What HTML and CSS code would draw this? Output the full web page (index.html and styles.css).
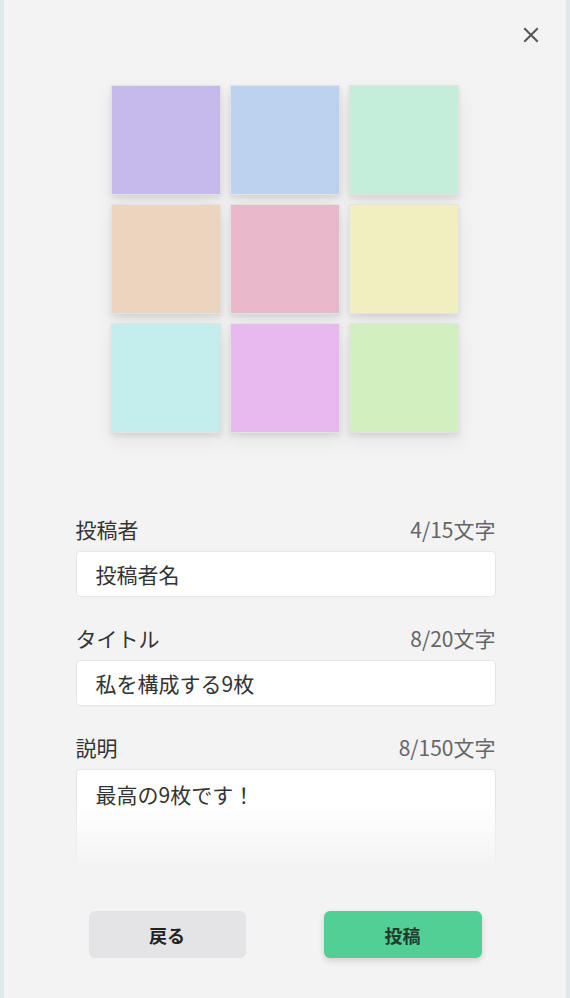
FILE: index.html
```html
<!DOCTYPE html>
<html lang="ja">
<head>
<meta charset="utf-8">
<title>投稿</title>
<link rel="stylesheet" href="styles.css">
</head>
<body>
<div class="panel">
  <div class="header">
    <button class="close" aria-label="閉じる">
      <svg width="16" height="16" viewBox="0 0 16 16"><path d="M2 2 L14 14 M14 2 L2 14" stroke="#555" stroke-width="2" stroke-linecap="square"/></svg>
    </button>
  </div>
  <div class="grid">
    <div class="tile c1"></div>
    <div class="tile c2"></div>
    <div class="tile c3"></div>
    <div class="tile c4"></div>
    <div class="tile c5"></div>
    <div class="tile c6"></div>
    <div class="tile c7"></div>
    <div class="tile c8"></div>
    <div class="tile c9"></div>
  </div>
  <div class="scroll">
    <div class="form">
      <div class="field">
        <div class="field-head"><span class="label">投稿者</span><span class="count">4/15文字</span></div>
        <div class="input">投稿者名</div>
      </div>
      <div class="field">
        <div class="field-head"><span class="label">タイトル</span><span class="count">8/20文字</span></div>
        <div class="input">私を構成する9枚</div>
      </div>
      <div class="field">
        <div class="field-head"><span class="label">説明</span><span class="count">8/150文字</span></div>
        <div class="input textarea">最高の9枚です！</div>
      </div>
    </div>
    <div class="fade"></div>
  </div>
  <div class="actions">
    <button class="btn back">戻る</button>
    <button class="btn post">投稿</button>
  </div>
</div>
</body>
</html>
```
FILE: styles.css
```css
* { box-sizing: border-box; }
html, body { margin: 0; padding: 0; }
body {
  background: #dfe8ea;
  font-family: "Noto Sans CJK JP", "Noto Sans", sans-serif;
  color: #333;
}
.panel {
  margin: 0 4px;
  height: 998px;
  background: #f3f3f3;
  display: flex;
  flex-direction: column;
}
.header {
  height: 85px;
  display: flex;
  justify-content: flex-end;
  align-items: flex-start;
  padding: 27px 27px 0 0;
}
.close {
  border: 0;
  background: transparent;
  padding: 0;
  width: 16px;
  height: 16px;
  display: flex;
}
.grid {
  display: grid;
  grid-template-columns: repeat(3, 110px);
  grid-auto-rows: 110px;
  gap: 9px;
  justify-content: center;
}
.tile {
  border: 1px solid #e3e3e3;
  box-shadow: 0 3px 5px rgba(0,0,0,0.08), 0 8px 18px rgba(0,0,0,0.07);
}
.c1 { background: #c6b9ec; }
.c2 { background: #bdd2ee; }
.c3 { background: #c4eed9; }
.c4 { background: #ecd5be; }
.c5 { background: #e8b9ca; }
.c6 { background: #f1efc0; }
.c7 { background: #c4eeee; }
.c8 { background: #e8b9ee; }
.c9 { background: #d2efbf; }
.scroll {
  position: relative;
  margin: 57px 50px 0 51px;
  height: 375px;
  overflow: hidden;
}
.form {
  width: 420px;
  margin: 0 auto;
  padding-top: 25px;
  display: flex;
  flex-direction: column;
  gap: 27px;
}
.field-head {
  display: flex;
  justify-content: space-between;
  align-items: center;
  height: 28px;
  font-size: 21px;
  line-height: 28px;
}
.label { color: #333; }
.count { color: #666; }
.input {
  margin-top: 8px;
  height: 46px;
  background: #fff;
  border: 1px solid #e6e6e6;
  border-radius: 4px;
  padding: 0 19px;
  font-size: 21px;
  line-height: 44px;
  color: #333;
}
.textarea {
  height: 140px;
  padding-top: 10px;
  line-height: 28px;
}
.fade {
  position: absolute;
  left: 0;
  right: 0;
  bottom: 0;
  height: 62px;
  background: linear-gradient(to bottom, rgba(243,243,243,0), rgba(243,243,243,0.92));
  pointer-events: none;
}
.actions {
  margin-top: 46px;
  display: flex;
  justify-content: center;
  gap: 78px;
}
.btn {
  width: 157px;
  height: 47px;
  border: 0;
  border-radius: 6px;
  font-family: "Noto Sans CJK JP", sans-serif;
  font-size: 18px;
  font-weight: 700;
}
.back {
  background: #e4e4e6;
  color: #222;
}
.post {
  width: 158px;
  background: #52cf94;
  color: #1f3d2e;
  box-shadow: 0 3px 6px rgba(0,0,0,0.14);
}
```
